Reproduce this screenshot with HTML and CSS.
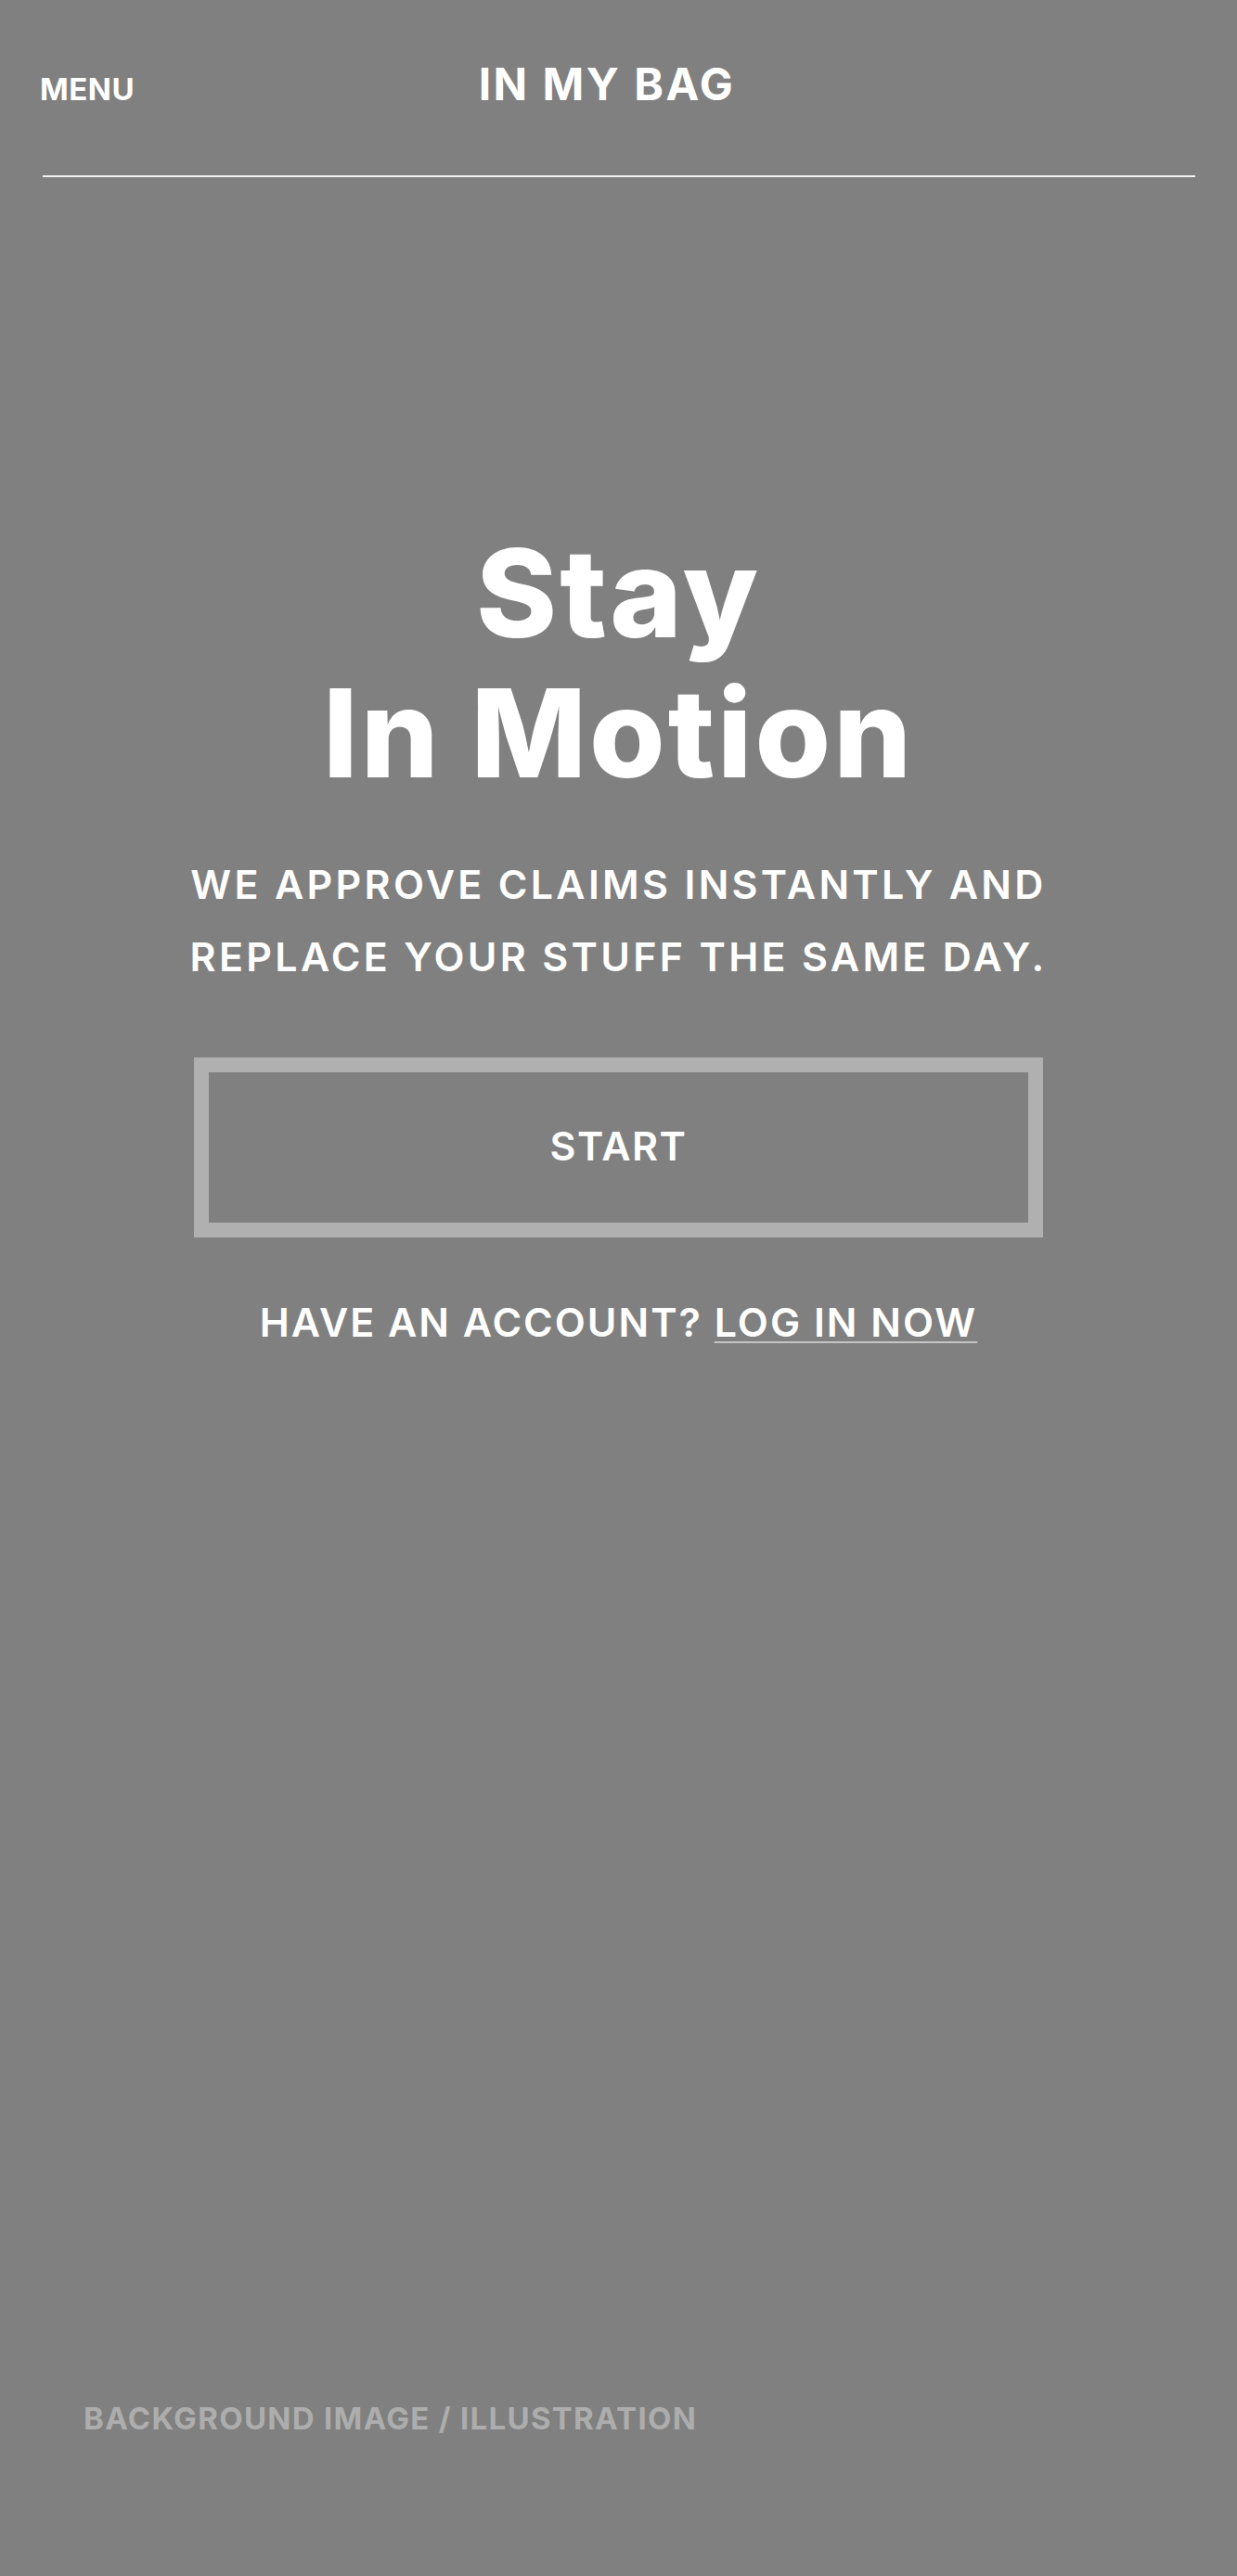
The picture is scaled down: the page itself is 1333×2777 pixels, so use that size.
FILE: index.html
```html
<!DOCTYPE html>
<html lang="en">
<head>
<meta charset="utf-8">
<title>In My Bag</title>
<link rel="stylesheet" href="styles.css">
</head>
<body>
<div class="page">
  <header class="topbar">
    <a class="menu" href="#">MENU</a>
    <div class="brand">IN MY BAG</div>
    <div class="spacer"></div>
  </header>
  <main class="hero">
    <h1 class="headline">Stay<br>In Motion</h1>
    <p class="lede">WE APPROVE CLAIMS INSTANTLY AND<br>REPLACE YOUR STUFF THE SAME DAY.</p>
    <a class="start" href="#">START</a>
    <p class="account">HAVE AN ACCOUNT? <a class="login" href="#">LOG IN NOW</a></p>
  </main>
  <div class="bg-label">BACKGROUND IMAGE / ILLUSTRATION</div>
</div>
</body>
</html>
```

FILE: styles.css
```css
html, body {
  margin: 0;
  padding: 0;
  background: #808080;
}
body {
  font-family: Inter, "Noto Sans", sans-serif;
  color: #ffffff;
}
a { color: inherit; text-decoration: none; }

.page {
  min-height: 2777px;
  display: flex;
  flex-direction: column;
}

.topbar {
  margin: 0 45px 0 46px;
  padding: 62px 0 69px;
  border-bottom: 2px solid #f2f2f2;
  display: grid;
  grid-template-columns: 1fr auto 1fr;
  align-items: baseline;
}
.menu {
  font-size: 33px;
  line-height: 40px;
  font-weight: 700;
  letter-spacing: 0.5px;
  margin-left: -3px;
  justify-self: start;
}
.brand {
  font-size: 48px;
  line-height: 58px;
  font-weight: 700;
  letter-spacing: 2.5px;
  margin-right: 26px;
}

.hero {
  display: flex;
  flex-direction: column;
  align-items: center;
  text-align: center;
  padding-top: 373px;
}
.headline {
  margin: 0;
  font-size: 132px;
  line-height: 151px;
  font-weight: 800;
  letter-spacing: 3px;
}
.lede {
  margin: 48px 0 0;
  font-size: 43px;
  line-height: 78px;
  font-weight: 600;
  letter-spacing: 3.3px;
}
.start {
  margin-top: 70px;
  box-sizing: border-box;
  width: 915px;
  height: 194px;
  border: 16px solid #b0b0b0;
  display: flex;
  align-items: center;
  justify-content: center;
  padding-bottom: 5px;
  font-size: 43px;
  line-height: 52px;
  font-weight: 600;
  letter-spacing: 1.5px;
}
.account {
  margin: 65px 0 0;
  font-size: 43px;
  line-height: 52px;
  font-weight: 600;
  letter-spacing: 2px;
}
.login {
  text-decoration: underline;
  text-decoration-color: #c4c4c4;
  text-decoration-thickness: 2px;
  text-underline-offset: 5px;
}

.bg-label {
  margin-top: auto;
  padding: 0 0 150px 90px;
  font-size: 33px;
  line-height: 40px;
  font-weight: 700;
  letter-spacing: 1.3px;
  color: #adadad;
}
```
